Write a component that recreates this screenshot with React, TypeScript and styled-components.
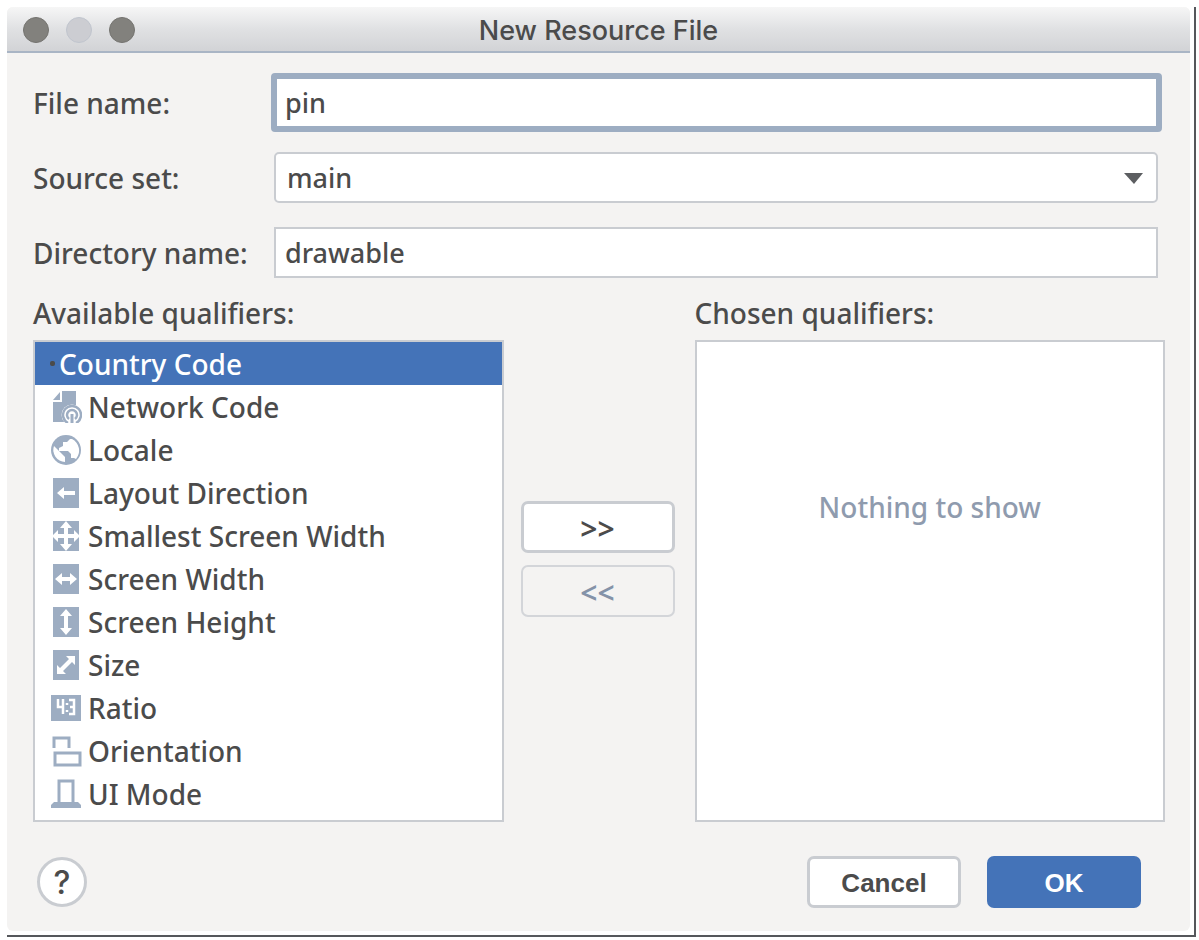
import React, { useState } from "react";
import styled, { createGlobalStyle, css } from "styled-components";

const ink = "#4b4b4b";
const line = "#c9ccd1";
const slate = "#9dadc2";
const blue = "#4473b8";
const panel = "#f4f3f2";
const uiFont = `"Noto Sans", "Open Sans", sans-serif`;

const GlobalStyle = createGlobalStyle`
  *, *::before, *::after { box-sizing: border-box; }
  body { margin: 0; background: #fff; color: ${ink}; font-family: ${uiFont}; }
`;

const Frame = styled.main`
  margin: 7px 3px 3px 7px;
  padding: 0 4px 4px 0;
  border-right: 2px solid #55575b;
  border-bottom: 2px solid #55575b;
  background: #fff;
`;

const Dialog = styled.section`
  background: ${panel};
  border-radius: 6px;
  overflow: hidden;
`;

const TitleBar = styled.header`
  display: grid;
  grid-template-columns: 1fr auto 1fr;
  align-items: center;
  height: 46px;
  padding: 2px 16px 0;
  border-bottom: 2px solid #a9b5c5;
  background: linear-gradient(#f6f6f6, #e0e1e3 50%, #d2d3d6);
`;

const Lights = styled.div`
  display: flex;
  gap: 17px;
`;

const Light = styled.button<{ $dim?: boolean }>`
  width: 26px;
  height: 26px;
  padding: 0;
  border: 1px solid ${(p) => (p.$dim ? "#c0c5ce" : "#74736f")};
  border-radius: 50%;
  background: ${(p) => (p.$dim ? "#cccdd2" : "#82817d")};
`;

const Title = styled.h1`
  margin: 0;
  padding-top: 2px;
  font: 500 27px/32px Inter, sans-serif;
`;

const Body = styled.form`
  padding: 20px 25px 23px 26px;
`;

const Fields = styled.div`
  display: grid;
  grid-template-columns: 238px 1fr;
  row-gap: 16px;
  margin-right: 3px;
`;

const labelText = css`
  font-size: 28px;
  line-height: 32px;
  font-weight: 500;
`;

const FieldLabel = styled.label`
  ${labelText}
  align-self: center;
`;

const FieldSlot = styled.div`
  position: relative;
  display: flex;
  align-items: center;
  height: 59px;
`;

const control = css`
  flex: 1;
  min-width: 0;
  height: 51px;
  margin: 0 4px 0 3px;
  padding: 0 9px;
  border: 2px solid ${line};
  background: #fff;
  color: ${ink};
  font: 500 27px/32px ${uiFont};
  outline: none;
`;

const TextInput = styled.input<{ $active?: boolean }>`
  ${control}
  ${(p) =>
    p.$active &&
    css`
      height: 59px;
      margin: 0;
      padding: 0 8px;
      border: 6px solid ${slate};
      border-radius: 4px;
    `}
`;

const Select = styled.select`
  ${control}
  appearance: none;
  padding: 0 11px;
  border-radius: 5px;
`;

const Caret = styled.svg`
  position: absolute;
  right: 19px;
  width: 19px;
  height: 12px;
  pointer-events: none;
`;

const Qualifiers = styled.div`
  display: grid;
  grid-template-columns: 1fr 191px 1fr;
  margin-top: 15px;
`;

const Column = styled.div`
  display: flex;
  flex-direction: column;
  gap: 11px;
`;

const Heading = styled.h2`
  ${labelText}
  margin: 0;
`;

const List = styled.ul`
  flex: 1;
  min-height: 482px;
  margin: 0;
  padding: 0;
  border: 2px solid ${line};
  background: #fff;
  list-style: none;
`;

const Option = styled.li<{ $selected: boolean }>`
  ${labelText}
  display: flex;
  align-items: center;
  gap: 10px;
  height: 43px;
  padding-left: 15px;
  white-space: nowrap;
  background: ${(p) => (p.$selected ? blue : "transparent")};
  color: ${(p) => (p.$selected ? "#fff" : ink)};
`;

const Dot = styled.span`
  width: 5px;
  height: 5px;
  margin-right: -6px;
  border-radius: 2px;
  background: ${ink};
`;

const Glyph = styled.svg`
  width: 32px;
  height: 32px;
  margin-right: -4px;
`;

const Empty = styled.p`
  ${labelText}
  flex: 1;
  min-height: 482px;
  margin: 0;
  padding-top: 149px;
  border: 2px solid ${line};
  background: #fff;
  color: #8f9bae;
  text-align: center;
`;

const Movers = styled.div`
  display: flex;
  flex-direction: column;
  align-items: flex-start;
  gap: 12px;
  padding: 204px 0 0 17px;
`;

const Button = styled.button<{ $primary?: boolean }>`
  width: 154px;
  height: 52px;
  padding: 2px 0 0;
  border: ${(p) => (p.$primary ? "0" : `3px solid ${line}`)};
  border-radius: 7px;
  background: ${(p) => (p.$primary ? blue : "#fff")};
  color: ${(p) => (p.$primary ? "#fff" : ink)};
  font: 700 26px/32px "Liberation Sans", sans-serif;

  &:disabled {
    border: 2px solid #d3d5d9;
    background: ${panel};
    color: #8492a8;
  }
`;

const MoveButton = styled(Button)`
  padding-top: 4px;
  font: 600 30px/32px ${uiFont};
`;

const Footer = styled.footer`
  display: flex;
  align-items: center;
  gap: 26px;
  margin-top: 34px;
  padding: 0 24px 0 4px;
`;

const Help = styled.button`
  width: 50px;
  height: 50px;
  margin-right: auto;
  padding: 2px 0 0;
  border: 3px solid ${line};
  border-radius: 50%;
  background: #fff;
  color: ${ink};
  font: 500 32px/40px Inter, sans-serif;
`;

const Tile = () => <path d="M3 1h26v30H3z" fill={slate} />;

const icons: Record<string, React.ReactNode> = {
  "Network Code": (
    <>
      <path d="M12 0h14v17H16v14H3V11h9z" fill={slate} />
      <path d="M10 1v8H3z" fill={slate} />
      <circle cx="22" cy="24" r="10.500" fill="#fff" />
      <path d="M18 32a9 9 0 1 1 8 0M19 28a5 5 0 1 1 6 0" fill="none" stroke={slate} strokeWidth="2.500" />
      <path d="M22 23v9" stroke={slate} strokeWidth="3" />
    </>
  ),
  Locale: (
    <>
      <circle cx="16" cy="16" r="15" fill={slate} />
      <path d="M4 12l11 11v5A12 12 0 0 1 4 12z" fill="#fff" />
      <path d="M20 5l-3 3h-4v4l-4 2v3h9l3 3v4h3l2 1a13 13 0 0 0-4-20z" fill="#fff" />
    </>
  ),
  "Layout Direction": (
    <>
      <Tile />
      <path d="M7 16l7-6v4h11v4H14v4z" fill="#fff" />
    </>
  ),
  "Smallest Screen Width": (
    <>
      <Tile />
      <path
        d="M16 1l6 7h-4v6h6v-4l6 6-6 6v-4h-6v6h4l-6 7-6-7h4v-6H8v4l-6-6 6-6v4h6V8h-4z"
        fill="#fff"
      />
    </>
  ),
  "Screen Width": (
    <>
      <Tile />
      <path d="M5 16l7-6v4h8v-4l7 6-7 6v-4h-8v4z" fill="#fff" />
    </>
  ),
  "Screen Height": (
    <>
      <Tile />
      <path d="M16 3l6 7h-4v12h4l-6 7-6-7h4V10h-4z" fill="#fff" />
    </>
  ),
  Size: (
    <>
      <Tile />
      <path d="M16 7h9v9l-3-3-9 9 3 3H7v-9l3 3 9-9z" fill="#fff" />
    </>
  ),
  Ratio: (
    <>
      <path d="M1 3h30v26H1z" fill={slate} />
      <path d="M8 7v8h6M13 7v15M19 8h5v14h-5M20 15h4M17 11v2M17 18v2" fill="none" stroke="#fff" strokeWidth="2.500" />
    </>
  ),
  Orientation: (
    <path d="M4 13V3h15v10M5 18h25v12H5z" fill="none" stroke={slate} strokeWidth="3" />
  ),
  "UI Mode": (
    <>
      <path d="M9 25V3h14v22" fill="none" stroke={slate} strokeWidth="3" />
      <path d="M4 24h24l3 3v3H1v-3z" fill={slate} />
    </>
  ),
};

const qualifiers = [
  "Country Code",
  "Network Code",
  "Locale",
  "Layout Direction",
  "Smallest Screen Width",
  "Screen Width",
  "Screen Height",
  "Size",
  "Ratio",
  "Orientation",
  "UI Mode",
];

export default function App() {
  const [selected, setSelected] = useState("Country Code");

  return (
    <>
      <GlobalStyle />
      <Frame>
        <Dialog role="dialog" aria-labelledby="title">
          <TitleBar>
            <Lights>
              <Light type="button" aria-label="Close" />
              <Light type="button" aria-label="Minimize" $dim />
              <Light type="button" aria-label="Zoom" />
            </Lights>
            <Title id="title">New Resource File</Title>
          </TitleBar>
          <Body onSubmit={(e) => e.preventDefault()}>
            <Fields>
              <FieldLabel htmlFor="file">File name:</FieldLabel>
              <FieldSlot>
                <TextInput id="file" defaultValue="pin" $active />
              </FieldSlot>
              <FieldLabel htmlFor="source">Source set:</FieldLabel>
              <FieldSlot>
                <Select id="source" defaultValue="main">
                  <option value="main">main</option>
                </Select>
                <Caret viewBox="0 0 19 12" aria-hidden="true">
                  <path d="M0 1h19l-9 11z" fill="#5c5e61" />
                </Caret>
              </FieldSlot>
              <FieldLabel htmlFor="directory">Directory name:</FieldLabel>
              <FieldSlot>
                <TextInput id="directory" defaultValue="drawable" />
              </FieldSlot>
            </Fields>
            <Qualifiers>
              <Column>
                <Heading id="available">Available qualifiers:</Heading>
                <List role="listbox" aria-labelledby="available">
                  {qualifiers.map((name) => (
                    <Option
                      key={name}
                      role="option"
                      aria-selected={name === selected}
                      $selected={name === selected}
                      onClick={() => setSelected(name)}
                    >
                      {icons[name] ? (
                        <Glyph viewBox="0 0 32 32" aria-hidden="true">
                          {icons[name]}
                        </Glyph>
                      ) : (
                        <Dot />
                      )}
                      {name}
                    </Option>
                  ))}
                </List>
              </Column>
              <Movers>
                <MoveButton type="button" aria-label="Add qualifier">
                  &gt;&gt;
                </MoveButton>
                <MoveButton type="button" aria-label="Remove qualifier" disabled>
                  &lt;&lt;
                </MoveButton>
              </Movers>
              <Column>
                <Heading>Chosen qualifiers:</Heading>
                <Empty>Nothing to show</Empty>
              </Column>
            </Qualifiers>
            <Footer>
              <Help type="button" aria-label="Help">
                ?
              </Help>
              <Button type="button">Cancel</Button>
              <Button type="submit" $primary>
                OK
              </Button>
            </Footer>
          </Body>
        </Dialog>
      </Frame>
    </>
  );
}
